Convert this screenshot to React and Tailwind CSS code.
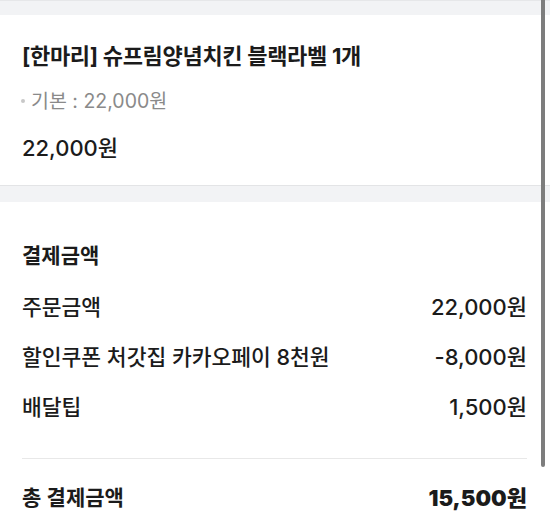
import React from 'react';

const rows = [
  { label: '주문금액', value: '22,000원' },
  { label: '할인쿠폰 처갓집 카카오페이 8천원', value: '-8,000원' },
  { label: '배달팁', value: '1,500원' },
];

const App = () => {
  return (
    <div className="relative h-[511px] w-[550px] overflow-hidden bg-white text-[#1b1b1b] font-['Inter','Noto_Sans_CJK_KR',sans-serif]">
      {/* top gray band */}
      <div className="h-[15px] border-t border-[#e6e7e9] bg-[#f2f3f5]" />

      {/* order item */}
      <div className="px-[22px] pt-[27px] pb-[23px]">
        <h2 className="h-[28px] text-[22px] font-bold leading-[28px] tracking-[-0.3px]">
          [한마리] 슈프림양념치킨 블랙라벨 1개
        </h2>
        <div className="mt-[19px] flex h-[24px] items-center text-[19.5px] leading-[24px] text-[#8a8a8a]">
          <span className="mr-[6px] ml-[-1px] inline-block h-[4px] w-[4px] rounded-full bg-[#c8c8c8]" />
          <span>기본 : 22,000원</span>
        </div>
        <div className="mt-[21px] h-[28px] text-[22px] font-medium leading-[28px]">22,000원</div>
      </div>

      <div className="h-[17px] border-t border-[#e3e4e6] bg-[#f2f3f5]" />

      {/* payment summary */}
      <div className="pl-[22px] pr-[23px] pt-[28px]">
        <h3 className="flex h-[52px] items-center text-[21px] font-semibold">결제금액</h3>
        {rows.map((row) => (
          <div key={row.label} className="flex h-[50px] items-center justify-between text-[21.5px] font-medium">
            <span>{row.label}</span>
            <span className="text-[22px]">{row.value}</span>
          </div>
        ))}
        <div className="mt-[26px] h-px bg-[#e8e8e8]" />
        <div className="mt-[19px] flex h-[40px] items-center justify-between text-[21px]">
          <span className="font-semibold">총 결제금액</span>
          <span className="text-[22px] font-black">15,500원</span>
        </div>
      </div>

      {/* scroll indicator */}
      <div className="absolute top-0 right-[5px] h-[467px] w-[4px] rounded-b-full bg-[#7d7d7d]" />
    </div>
  );
};

export default App;
